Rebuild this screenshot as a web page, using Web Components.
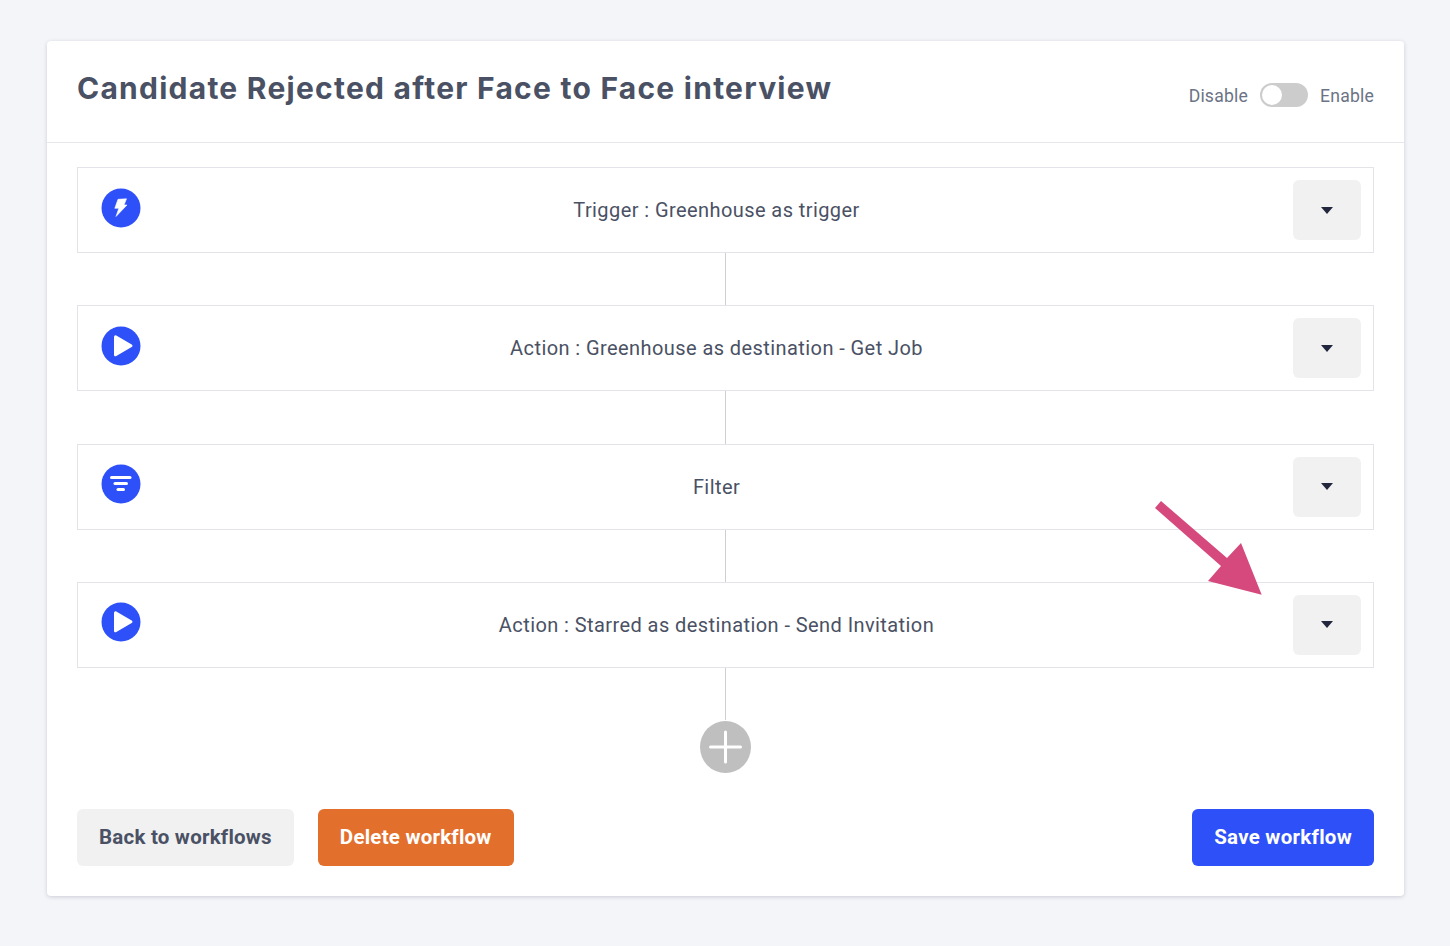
<!DOCTYPE html>
<html lang="en"><head><meta charset="utf-8"><title>Workflow</title>
<style>
html,body{margin:0;padding:0;background:#f4f5f9;}
body{font-family:Roboto,"Liberation Sans",sans-serif;}
</style></head>
<body>
<wf-page>
  <wf-card>
    <wf-header slot="header" title-text="Candidate Rejected after Face to Face interview"></wf-header>
    <wf-step icon="bolt">Trigger : Greenhouse as trigger</wf-step>
    <wf-line></wf-line>
    <wf-step icon="play">Action : Greenhouse as destination - Get Job</wf-step>
    <wf-line></wf-line>
    <wf-step icon="filter">Filter</wf-step>
    <wf-line></wf-line>
    <wf-step icon="play">Action : Starred as destination - Send Invitation</wf-step>
    <wf-line></wf-line>
    <wf-add></wf-add>
    <wf-actions slot="footer"></wf-actions>
    <wf-arrow slot="overlay"></wf-arrow>
  </wf-card>
</wf-page>
<script>
function def(name, html, init){
  customElements.define(name, class extends HTMLElement{
    constructor(){super();const r=this.attachShadow({mode:'open'});r.innerHTML=html;}
    connectedCallback(){if(init)init(this);}
  });
}
def('wf-page',`<style>:host{display:block;box-sizing:border-box;width:1450px;height:946px;padding:41px 46px 50px 47px;background:#f4f5f9}</style><slot></slot>`);
def('wf-card',`<style>
:host{display:block;position:relative;height:855px;background:#fff;border-radius:4px;box-shadow:0 1px 4px rgba(40,50,80,.2)}
.body{padding:24px 30px 0;display:flex;flex-direction:column}
</style><slot name="header"></slot><div class="body"><slot></slot></div><slot name="footer"></slot><slot name="overlay"></slot>`);
def('wf-header',`<style>
:host{display:flex;box-sizing:border-box;height:102px;padding:0 30px;border-bottom:1px solid #e5e7eb;justify-content:space-between}
h1{margin:29px 0 0;font:700 30px/36px Inter,"Liberation Sans",sans-serif;letter-spacing:1.25px;color:#4a5164;white-space:nowrap}
.tg{display:flex;align-items:center;gap:12px;height:28px;margin-top:40px;font-size:17.600px;letter-spacing:.2px;color:#6b7385}
.tg span{padding-top:1px}
.sw{width:48px;height:24px;border-radius:12px;background:#ccc;position:relative}
.sw i{position:absolute;left:2px;top:2px;width:20px;height:20px;border-radius:50%;background:#fff}
</style><h1></h1><div class="tg"><span>Disable</span><div class="sw"><i></i></div><span>Enable</span></div>`,
el=>{el.shadowRoot.querySelector('h1').textContent=el.getAttribute('title-text');});
const icons={
 bolt:`<path d="M17 11.300 25.500 10.800 23 17H26L15 28.500 17.800 20.300H13.800Z" fill="#fff" stroke="#fff" stroke-width=".6" stroke-linejoin="round"/>`,
 play:`<path d="M13 10.300v18.400c0 1.300 1.200 2 2.300 1.400l15.400-9c1-.6 1-2 0-2.600l-15.400-9.100c-1.100-.6-2.300.1-2.300 1.900Z" fill="#fff"/>`,
 filter:`<rect x="9" y="12" width="21.500" height="3" rx="1.500" fill="#fff"/><rect x="12.500" y="18" width="14.500" height="3" rx="1.500" fill="#fff"/><rect x="15.500" y="24" width="8.500" height="3" rx="1.500" fill="#fff"/>`
};
def('wf-step',`<style>
:host{display:flex;align-items:center;box-sizing:border-box;height:86px;border:1px solid #e2e4e9;padding:0 12px 0 23px;flex:none}
svg.i{width:40px;height:40px;margin-top:-5px;flex:none}
.t{flex:1;text-align:center;font-size:20px;color:#4a5164;letter-spacing:.42px;padding-right:1px}
.b{width:68px;height:60px;border-radius:6px;background:#f1f1f2;display:flex;align-items:center;justify-content:center;flex:none}
.b svg{width:12px;height:7px}
</style><svg class="i" viewBox="0 0 40 40"><circle cx="20" cy="20" r="19.500" fill="#2d50f8"/><g id="g"></g></svg>
<div class="t"><slot></slot></div>
<div class="b"><svg viewBox="0 0 12 7"><path d="M0 0h12L6 7Z" fill="#23273d"/></svg></div>`,
el=>{el.shadowRoot.getElementById('g').innerHTML=icons[el.getAttribute('icon')];});
def('wf-line',`<style>:host{display:block;width:1px;height:52.330px;background:#cfcfcf;margin:0 auto;flex:none}</style>`);
def('wf-add',`<style>:host{display:block;width:51px;height:52px;margin:.67px auto 0;flex:none}svg{display:block}</style>
<svg width="51" height="52" viewBox="0 0 51 52"><ellipse cx="25.500" cy="26" rx="25.500" ry="26" fill="#bfbfbf"/><path d="M25.500 11v30M10.500 26h30" stroke="#fff" stroke-width="3" stroke-linecap="round" fill="none"/></svg>`);
def('wf-actions',`<style>
:host{display:flex;justify-content:space-between;padding:36px 30px 0}
.l{display:flex;gap:24px}
button{height:57px;border:0;border-radius:6px;padding:0 22px 1px;font:700 20.500px Roboto,"Liberation Sans",sans-serif;letter-spacing:.22px;color:#fff}
.g{background:#f1f1f2;color:#4a5164}.o{background:#e36f2d}.s{background:#2d50f8;letter-spacing:.27px}
</style><div class="l"><button class="g">Back to workflows</button><button class="o">Delete workflow</button></div><button class="s">Save workflow</button>`);
def('wf-arrow',`<style>:host{position:absolute;left:1107px;top:458px;width:112px;height:98px;display:block}svg{display:block}</style>
<svg width="112" height="98" viewBox="0 0 112 98"><path d="M7 2 1 9 67 67 54 82 107.700 95.700 87 44 73 59Z" fill="#d6497c"/></svg>`);
</script>
</body></html>
